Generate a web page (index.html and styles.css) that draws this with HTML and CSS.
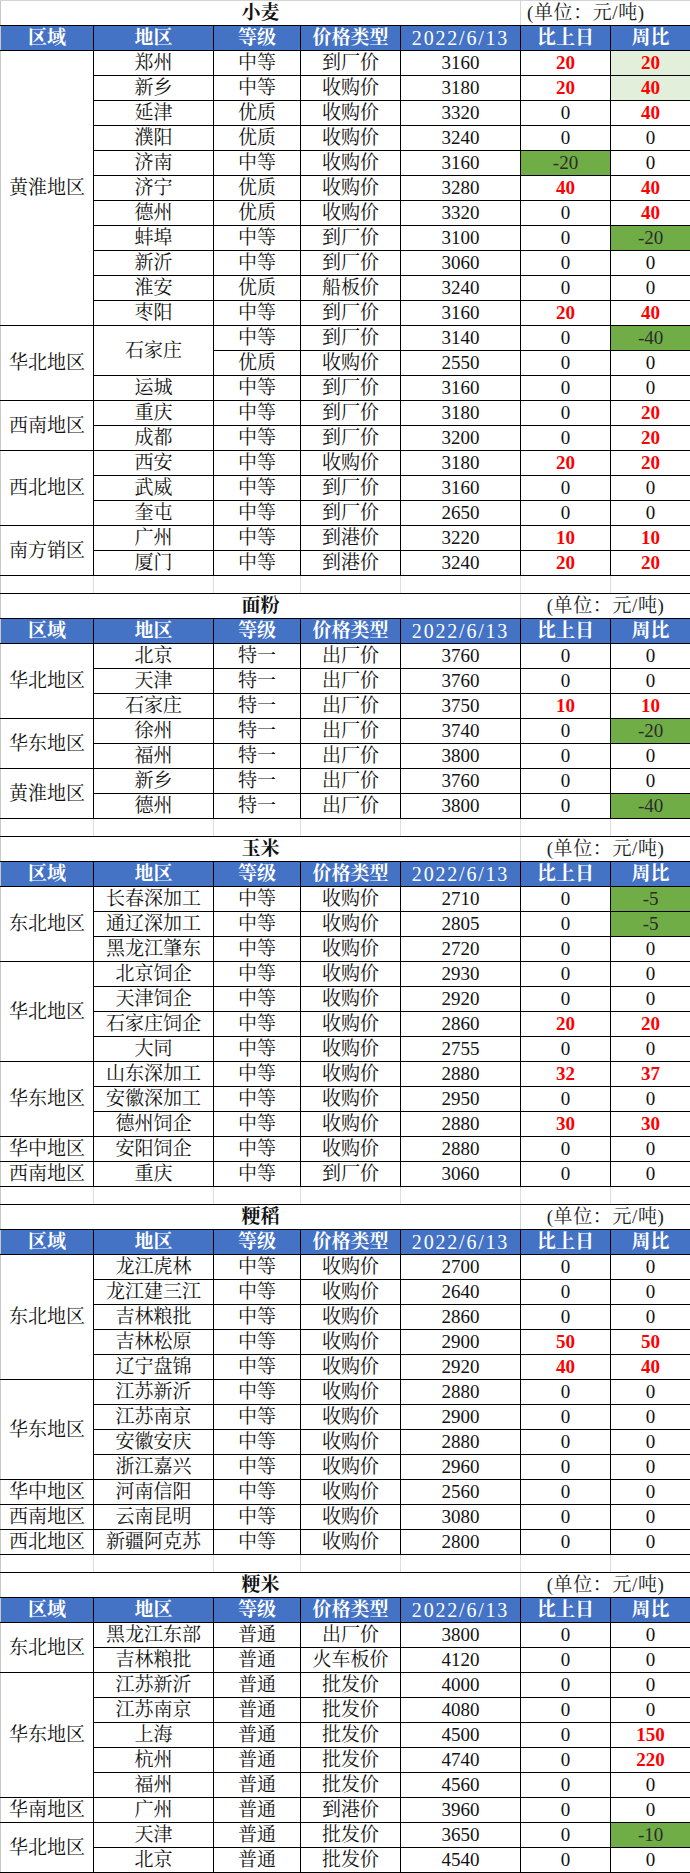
FILE: index.html
```html
<!DOCTYPE html>
<html lang="zh-CN">
<head>
<meta charset="utf-8">
<title>粮食价格</title>
<link rel="stylesheet" href="styles.css">
</head>
<body>
<table class="sheet">
<colgroup>
<col class="c1"><col class="c2"><col class="c3"><col class="c4"><col class="c5"><col class="c6"><col class="c7">
</colgroup>
<tbody>
<!-- 小麦 -->
<tr class="tit first"><td colspan="5" class="tname">小麦</td><td colspan="2" class="unit unit-left">(单位：元/吨)</td></tr>
<tr class="hd"><td class="reg">区域</td><td>地区</td><td>等级</td><td>价格类型</td><td class="date">2022/6/13</td><td>比上日</td><td class="last">周比</td></tr>
<tr><td class="reg" rowspan="11">黄淮地区</td><td>郑州</td><td>中等</td><td>到厂价</td><td class="n">3160</td><td class="n up">20</td><td class="n up lg last">20</td></tr>
<tr><td>新乡</td><td>中等</td><td>收购价</td><td class="n">3180</td><td class="n up">20</td><td class="n up lg last">40</td></tr>
<tr><td>延津</td><td>优质</td><td>收购价</td><td class="n">3320</td><td class="n">0</td><td class="n up last">40</td></tr>
<tr><td>濮阳</td><td>优质</td><td>收购价</td><td class="n">3240</td><td class="n">0</td><td class="n last">0</td></tr>
<tr><td>济南</td><td>中等</td><td>收购价</td><td class="n">3160</td><td class="n dn">-20</td><td class="n last">0</td></tr>
<tr><td>济宁</td><td>优质</td><td>收购价</td><td class="n">3280</td><td class="n up">40</td><td class="n up last">40</td></tr>
<tr><td>德州</td><td>优质</td><td>收购价</td><td class="n">3320</td><td class="n">0</td><td class="n up last">40</td></tr>
<tr><td>蚌埠</td><td>中等</td><td>到厂价</td><td class="n">3100</td><td class="n">0</td><td class="n dn last">-20</td></tr>
<tr><td>新沂</td><td>中等</td><td>到厂价</td><td class="n">3060</td><td class="n">0</td><td class="n last">0</td></tr>
<tr><td>淮安</td><td>优质</td><td>船板价</td><td class="n">3240</td><td class="n">0</td><td class="n last">0</td></tr>
<tr><td>枣阳</td><td>中等</td><td>到厂价</td><td class="n">3160</td><td class="n up">20</td><td class="n up last">40</td></tr>
<tr><td class="reg" rowspan="3">华北地区</td><td rowspan="2">石家庄</td><td>中等</td><td>到厂价</td><td class="n">3140</td><td class="n">0</td><td class="n dn last">-40</td></tr>
<tr><td>优质</td><td>收购价</td><td class="n">2550</td><td class="n">0</td><td class="n last">0</td></tr>
<tr><td>运城</td><td>中等</td><td>到厂价</td><td class="n">3160</td><td class="n">0</td><td class="n last">0</td></tr>
<tr><td class="reg" rowspan="2">西南地区</td><td>重庆</td><td>中等</td><td>到厂价</td><td class="n">3180</td><td class="n">0</td><td class="n up last">20</td></tr>
<tr><td>成都</td><td>中等</td><td>到厂价</td><td class="n">3200</td><td class="n">0</td><td class="n up last">20</td></tr>
<tr><td class="reg" rowspan="3">西北地区</td><td>西安</td><td>中等</td><td>收购价</td><td class="n">3180</td><td class="n up">20</td><td class="n up last">20</td></tr>
<tr><td>武威</td><td>中等</td><td>到厂价</td><td class="n">3160</td><td class="n">0</td><td class="n last">0</td></tr>
<tr><td>奎屯</td><td>中等</td><td>到厂价</td><td class="n">2650</td><td class="n">0</td><td class="n last">0</td></tr>
<tr><td class="reg" rowspan="2">南方销区</td><td>广州</td><td>中等</td><td>到港价</td><td class="n">3220</td><td class="n up">10</td><td class="n up last">10</td></tr>
<tr><td>厦门</td><td>中等</td><td>到港价</td><td class="n">3240</td><td class="n up">20</td><td class="n up last">20</td></tr>
<tr class="gap"><td class="reg"></td><td></td><td></td><td></td><td></td><td></td><td class="last"></td></tr>

<!-- 面粉 -->
<tr class="tit"><td colspan="5" class="tname">面粉</td><td colspan="2" class="unit">(单位：元/吨)</td></tr>
<tr class="hd"><td class="reg">区域</td><td>地区</td><td>等级</td><td>价格类型</td><td class="date">2022/6/13</td><td>比上日</td><td class="last">周比</td></tr>
<tr><td class="reg" rowspan="3">华北地区</td><td>北京</td><td>特一</td><td>出厂价</td><td class="n">3760</td><td class="n">0</td><td class="n last">0</td></tr>
<tr><td>天津</td><td>特一</td><td>出厂价</td><td class="n">3760</td><td class="n">0</td><td class="n last">0</td></tr>
<tr><td>石家庄</td><td>特一</td><td>出厂价</td><td class="n">3750</td><td class="n up">10</td><td class="n up last">10</td></tr>
<tr><td class="reg" rowspan="2">华东地区</td><td>徐州</td><td>特一</td><td>出厂价</td><td class="n">3740</td><td class="n">0</td><td class="n dn last">-20</td></tr>
<tr><td>福州</td><td>特一</td><td>出厂价</td><td class="n">3800</td><td class="n">0</td><td class="n last">0</td></tr>
<tr><td class="reg" rowspan="2">黄淮地区</td><td>新乡</td><td>特一</td><td>出厂价</td><td class="n">3760</td><td class="n">0</td><td class="n last">0</td></tr>
<tr><td>德州</td><td>特一</td><td>出厂价</td><td class="n">3800</td><td class="n">0</td><td class="n dn last">-40</td></tr>
<tr class="gap"><td class="reg"></td><td></td><td></td><td></td><td></td><td></td><td class="last"></td></tr>

<!-- 玉米 -->
<tr class="tit"><td colspan="5" class="tname">玉米</td><td colspan="2" class="unit">(单位：元/吨)</td></tr>
<tr class="hd"><td class="reg">区域</td><td>地区</td><td>等级</td><td>价格类型</td><td class="date">2022/6/13</td><td>比上日</td><td class="last">周比</td></tr>
<tr><td class="reg" rowspan="3">东北地区</td><td>长春深加工</td><td>中等</td><td>收购价</td><td class="n">2710</td><td class="n">0</td><td class="n dn last">-5</td></tr>
<tr><td>通辽深加工</td><td>中等</td><td>收购价</td><td class="n">2805</td><td class="n">0</td><td class="n dn last">-5</td></tr>
<tr><td>黑龙江肇东</td><td>中等</td><td>收购价</td><td class="n">2720</td><td class="n">0</td><td class="n last">0</td></tr>
<tr><td class="reg" rowspan="4">华北地区</td><td>北京饲企</td><td>中等</td><td>收购价</td><td class="n">2930</td><td class="n">0</td><td class="n last">0</td></tr>
<tr><td>天津饲企</td><td>中等</td><td>收购价</td><td class="n">2920</td><td class="n">0</td><td class="n last">0</td></tr>
<tr><td>石家庄饲企</td><td>中等</td><td>收购价</td><td class="n">2860</td><td class="n up">20</td><td class="n up last">20</td></tr>
<tr><td>大同</td><td>中等</td><td>收购价</td><td class="n">2755</td><td class="n">0</td><td class="n last">0</td></tr>
<tr><td class="reg" rowspan="3">华东地区</td><td>山东深加工</td><td>中等</td><td>收购价</td><td class="n">2880</td><td class="n up">32</td><td class="n up last">37</td></tr>
<tr><td>安徽深加工</td><td>中等</td><td>收购价</td><td class="n">2950</td><td class="n">0</td><td class="n last">0</td></tr>
<tr><td>德州饲企</td><td>中等</td><td>收购价</td><td class="n">2880</td><td class="n up">30</td><td class="n up last">30</td></tr>
<tr><td class="reg">华中地区</td><td>安阳饲企</td><td>中等</td><td>收购价</td><td class="n">2880</td><td class="n">0</td><td class="n last">0</td></tr>
<tr><td class="reg">西南地区</td><td>重庆</td><td>中等</td><td>到厂价</td><td class="n">3060</td><td class="n">0</td><td class="n last">0</td></tr>
<tr class="gap"><td class="reg"></td><td></td><td></td><td></td><td></td><td></td><td class="last"></td></tr>

<!-- 粳稻 -->
<tr class="tit"><td colspan="5" class="tname">粳稻</td><td colspan="2" class="unit">(单位：元/吨)</td></tr>
<tr class="hd"><td class="reg">区域</td><td>地区</td><td>等级</td><td>价格类型</td><td class="date">2022/6/13</td><td>比上日</td><td class="last">周比</td></tr>
<tr><td class="reg" rowspan="5">东北地区</td><td>龙江虎林</td><td>中等</td><td>收购价</td><td class="n">2700</td><td class="n">0</td><td class="n last">0</td></tr>
<tr><td>龙江建三江</td><td>中等</td><td>收购价</td><td class="n">2640</td><td class="n">0</td><td class="n last">0</td></tr>
<tr><td>吉林粮批</td><td>中等</td><td>收购价</td><td class="n">2860</td><td class="n">0</td><td class="n last">0</td></tr>
<tr><td>吉林松原</td><td>中等</td><td>收购价</td><td class="n">2900</td><td class="n up">50</td><td class="n up last">50</td></tr>
<tr><td>辽宁盘锦</td><td>中等</td><td>收购价</td><td class="n">2920</td><td class="n up">40</td><td class="n up last">40</td></tr>
<tr><td class="reg" rowspan="4">华东地区</td><td>江苏新沂</td><td>中等</td><td>收购价</td><td class="n">2880</td><td class="n">0</td><td class="n last">0</td></tr>
<tr><td>江苏南京</td><td>中等</td><td>收购价</td><td class="n">2900</td><td class="n">0</td><td class="n last">0</td></tr>
<tr><td>安徽安庆</td><td>中等</td><td>收购价</td><td class="n">2880</td><td class="n">0</td><td class="n last">0</td></tr>
<tr><td>浙江嘉兴</td><td>中等</td><td>收购价</td><td class="n">2960</td><td class="n">0</td><td class="n last">0</td></tr>
<tr><td class="reg">华中地区</td><td>河南信阳</td><td>中等</td><td>收购价</td><td class="n">2560</td><td class="n">0</td><td class="n last">0</td></tr>
<tr><td class="reg">西南地区</td><td>云南昆明</td><td>中等</td><td>收购价</td><td class="n">3080</td><td class="n">0</td><td class="n last">0</td></tr>
<tr><td class="reg">西北地区</td><td>新疆阿克苏</td><td>中等</td><td>收购价</td><td class="n">2800</td><td class="n">0</td><td class="n last">0</td></tr>
<tr class="gap"><td class="reg"></td><td></td><td></td><td></td><td></td><td></td><td class="last"></td></tr>

<!-- 粳米 -->
<tr class="tit"><td colspan="5" class="tname">粳米</td><td colspan="2" class="unit">(单位：元/吨)</td></tr>
<tr class="hd"><td class="reg">区域</td><td>地区</td><td>等级</td><td>价格类型</td><td class="date">2022/6/13</td><td>比上日</td><td class="last">周比</td></tr>
<tr><td class="reg" rowspan="2">东北地区</td><td>黑龙江东部</td><td>普通</td><td>出厂价</td><td class="n">3800</td><td class="n">0</td><td class="n last">0</td></tr>
<tr><td>吉林粮批</td><td>普通</td><td>火车板价</td><td class="n">4120</td><td class="n">0</td><td class="n last">0</td></tr>
<tr><td class="reg" rowspan="5">华东地区</td><td>江苏新沂</td><td>普通</td><td>批发价</td><td class="n">4000</td><td class="n">0</td><td class="n last">0</td></tr>
<tr><td>江苏南京</td><td>普通</td><td>批发价</td><td class="n">4080</td><td class="n">0</td><td class="n last">0</td></tr>
<tr><td>上海</td><td>普通</td><td>批发价</td><td class="n">4500</td><td class="n">0</td><td class="n up last">150</td></tr>
<tr><td>杭州</td><td>普通</td><td>批发价</td><td class="n">4740</td><td class="n">0</td><td class="n up last">220</td></tr>
<tr><td>福州</td><td>普通</td><td>批发价</td><td class="n">4560</td><td class="n">0</td><td class="n last">0</td></tr>
<tr><td class="reg">华南地区</td><td>广州</td><td>普通</td><td>到港价</td><td class="n">3960</td><td class="n">0</td><td class="n last">0</td></tr>
<tr><td class="reg" rowspan="2">华北地区</td><td>天津</td><td>普通</td><td>批发价</td><td class="n">3650</td><td class="n">0</td><td class="n dn last">-10</td></tr>
<tr><td>北京</td><td>普通</td><td>批发价</td><td class="n">4540</td><td class="n">0</td><td class="n last">0</td></tr>
</tbody>
</table>
</body>
</html>
```

FILE: styles.css
```css
html, body {
  margin: 0;
  padding: 0;
  background: #ffffff;
}

.sheet {
  border-collapse: collapse;
  table-layout: fixed;
  width: 690px;
  font-family: "Liberation Serif", "Noto Serif CJK SC", "Noto Sans CJK SC", serif;
  font-size: 19px;
  color: #111111;
}

.c1 { width: 93px; }
.c2 { width: 120px; }
.c3 { width: 87px; }
.c4 { width: 100px; }
.c5 { width: 120px; }
.c6 { width: 90px; }
.c7 { width: 80px; }

.sheet td {
  height: 24px;
  padding: 0;
  border: 1px solid #000000;
  text-align: center;
  vertical-align: middle;
  line-height: 22px;
  white-space: nowrap;
  overflow: hidden;
}

.sheet td.reg {
  border-left-color: #c8c8c8;
}

.sheet td.last {
  border-right-color: #c8c8c8;
}

.sheet .n {
  font-size: 19px;
}

.sheet .up {
  color: #ff0000;
  font-weight: bold;
}

.sheet .dn {
  background: #70ad47;
  color: #2b2b2b;
}

.sheet .lg {
  background: #e2efda;
}

/* header row */
.hd td {
  background: #4472c4;
  color: #ffffff;
  font-weight: bold;
  font-size: 19px;
}

.hd td.date {
  font-weight: normal;
  letter-spacing: 1.8px;
  font-size: 20px;
}

/* title row */
.tit td {
  border-left: none;
  border-right: none;
  border-bottom: 1px solid #000000;
}

.tit td.tname {
  font-weight: bold;
  font-size: 19px;
  border-left: 1px solid #c8c8c8;
}

.tit td.unit {
  font-size: 19px;
  letter-spacing: 0.6px;
  border-left: 1px solid #d4d4d4;
  border-right: 1px solid #c8c8c8;
  color: #222222;
}

.tit td.unit-left {
  text-align: left;
  padding-left: 6px;
}

.tit.first td {
  border-top: 1px solid #d4d4d4;
}

/* spacer row between sections */
.gap td {
  height: 17px;
  line-height: 17px;
  border-left: 1px solid #dcdcdc;
  border-right: 1px solid #dcdcdc;
}
```
